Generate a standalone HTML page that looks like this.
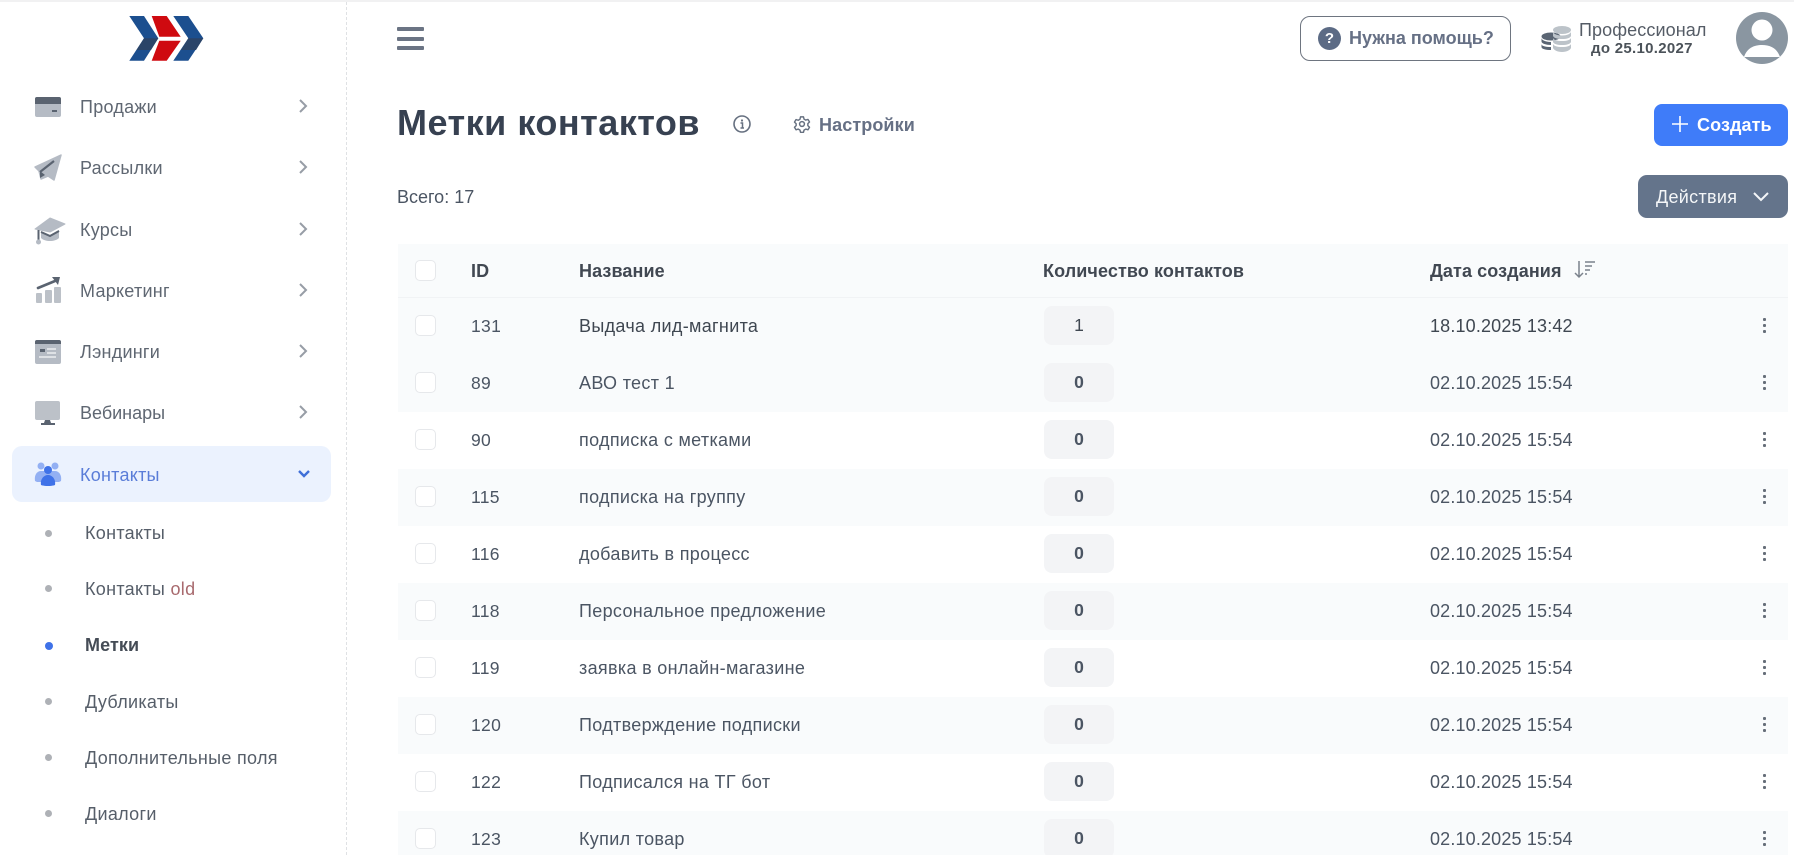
<!DOCTYPE html>
<html lang="ru"><head><meta charset="utf-8"><title>Метки контактов</title>
<style>
*{box-sizing:border-box}
html,body{margin:0;padding:0;width:1794px;height:855px;overflow:hidden;background:#fff;font-family:"Liberation Sans","Noto Sans CJK SC",sans-serif}
#p{position:relative;width:1794px;height:855px;overflow:hidden}
.a{position:absolute}
.t{position:absolute;white-space:nowrap;line-height:24px;height:24px}
.n{font-size:18px;color:#5f6772;left:80px;letter-spacing:.25px}
.s{font-size:18px;color:#565e69;left:85px;letter-spacing:.3px}
.d{position:absolute;left:45px;width:7px;height:7px;border-radius:50%;background:#aeb1b6}
.c{position:absolute;left:297px;width:12px;height:16px}
.r{position:absolute;left:398px;width:1390px;height:57px}
.sh{background:#f9fbfc}
.x{position:absolute;left:17px;top:17px;width:21px;height:21px;border:1px solid #e6e8eb;border-radius:5px;background:#fff}
.i{font-size:17.5px;color:#4b5563;left:73px;top:16px;letter-spacing:.3px}
.m{font-size:18px;color:#4b5563;left:181px;top:16px;letter-spacing:.32px}
.p{position:absolute;left:646px;top:8px;width:70px;height:39px;border-radius:8px;background:#f3f4f6;text-align:center;font-size:17.5px;font-weight:700;line-height:39px;color:#4b5563}
.w{font-size:18px;color:#4b5563;left:1032px;top:16px;letter-spacing:.16px}
.k{position:absolute;left:1365px;top:20px;width:3px;height:15px;background:radial-gradient(circle at 1.5px 1.5px,#666e79 1.5px,transparent 1.6px) 0 0/3px 6px repeat-y}
.h{font-size:18px;font-weight:700;color:#414852;letter-spacing:.1px}
</style></head><body><div id="p">

<div class="a" style="left:0;top:0;width:1794px;height:2px;background:#f1f1f2"></div>
<div class="a" style="left:346px;top:2px;width:0;height:853px;border-left:1px dashed #dfe1e4"></div>

<!-- logo -->
<svg class="a" style="left:125px;top:12px" width="84" height="54" viewBox="125 12 84 54">
<polygon points="129.300,16 144,16 158.300,38.300 144,60.700 129.300,60.700 144,38.300" fill="#1c4f8f"/>
<polygon points="144,38.300 158.300,38.300 151,50 136.500,50" fill="#2b4468"/>
<polygon points="151.700,16 166.700,16 180.700,36.700 159.300,36.700" fill="#cf0a10"/>
<polygon points="159.300,40.700 180.700,40.700 166.700,60.700 151.700,60.700" fill="#cf0a10"/>
<polygon points="173.300,16 188.300,16 203.300,38.300 188.300,60.700 173.300,60.700 188.300,38.300" fill="#1c4f8f"/>
<polygon points="188.300,38.300 203.300,38.300 196,50 181,50" fill="#2b4468"/>
</svg>

<!-- sidebar icons -->
<svg class="a" style="left:30px;top:90px" width="42" height="345" viewBox="30 90 42 345">
<rect x="35" y="97" width="26" height="20" rx="2" fill="#b5bbc4"/>
<path d="M35 104V99a2 2 0 0 1 2-2h22a2 2 0 0 1 2 2v5z" fill="#5a6370"/>
<rect x="52" y="110" width="5" height="2" fill="#5a6370"/>
<path d="M35 167 61 155 54 180 48 176 41 179 39 171z" fill="#b5bbc4" stroke="#b5bbc4" stroke-width="1.5" stroke-linejoin="round"/>
<path d="M40 172 54 161" stroke="#5a6370" stroke-width="2.2"/>
<path d="M40 171v7l5-3z" fill="#5a6370"/>
<path d="M35 229 50 218 65 224 50 232z" fill="#b5bbc4" stroke="#b5bbc4" stroke-linejoin="round"/>
<path d="M41 231 50 235 59 230v8c-4 4-14 4-18 0z" fill="#b5bbc4"/>
<path d="M41 232 50 236 59 231" stroke="#5a6370" stroke-width="2" fill="none"/>
<path d="M38.500 230v10" stroke="#5a6370" stroke-width="2"/>
<circle cx="38.500" cy="242" r="2.500" fill="#b5bbc4"/>
<rect x="36" y="293" width="6" height="10" rx="1" fill="#bcc1c8"/>
<rect x="45" y="290" width="7" height="13" rx="1" fill="#bcc1c8"/>
<rect x="54" y="287" width="7" height="16" rx="1" fill="#bcc1c8"/>
<path d="M38 288 55 281" stroke="#5a6370" stroke-width="2.600" stroke-linecap="round"/>
<path d="M52 277 60 277 58 285z" fill="#5a6370"/>
<rect x="35" y="340" width="26" height="24" rx="2" fill="#b5bbc4"/>
<path d="M35 344v-2a2 2 0 0 1 2-2h22a2 2 0 0 1 2 2v2z" fill="#5a6370"/>
<rect x="40" y="349" width="5" height="3" fill="#5a6370"/>
<path d="M47 349h9M47 353h9M39 357h17" stroke="#eceef0" stroke-width="1.500"/>
<rect x="35" y="401" width="25" height="19" rx="2" fill="#bcc1c8"/>
<path d="M45 420h5l1 3h4v2H41v-2h3z" fill="#5a6370"/>
</svg>
<svg class="a" style="left:33px;top:460px;z-index:3" width="30" height="26" viewBox="33 460 30 26">
<circle cx="41" cy="466" r="3.500" fill="#93b0f3"/><circle cx="55" cy="466" r="3.500" fill="#93b0f3"/>
<path d="M35 481c-1-6 2-10 6-10h14c4 0 7 4 6 10l-2 1H37z" fill="#93b0f3"/>
<circle cx="48" cy="470" r="4" fill="#3f72e8"/>
<path d="M41 485c-1-6 3-10 7-10s8 4 7 10c0 0-2 1-7 1s-7-1-7-1z" fill="#3f72e8"/>
</svg>

<!-- sidebar -->
<div class="t n" style="top:95px">Продажи</div>
<div class="t n" style="top:156px">Рассылки</div>
<div class="t n" style="top:218px">Курсы</div>
<div class="t n" style="top:279px">Маркетинг</div>
<div class="t n" style="top:340px">Лэндинги</div>
<div class="t n" style="top:401px;letter-spacing:0">Вебинары</div>
<svg class="c" style="top:98px" viewBox="0 0 12 16"><path d="M3 2l6 6-6 6" fill="none" stroke="#979da6" stroke-width="2"/></svg>
<svg class="c" style="top:159px" viewBox="0 0 12 16"><path d="M3 2l6 6-6 6" fill="none" stroke="#979da6" stroke-width="2"/></svg>
<svg class="c" style="top:221px" viewBox="0 0 12 16"><path d="M3 2l6 6-6 6" fill="none" stroke="#979da6" stroke-width="2"/></svg>
<svg class="c" style="top:282px" viewBox="0 0 12 16"><path d="M3 2l6 6-6 6" fill="none" stroke="#979da6" stroke-width="2"/></svg>
<svg class="c" style="top:343px" viewBox="0 0 12 16"><path d="M3 2l6 6-6 6" fill="none" stroke="#979da6" stroke-width="2"/></svg>
<svg class="c" style="top:404px" viewBox="0 0 12 16"><path d="M3 2l6 6-6 6" fill="none" stroke="#979da6" stroke-width="2"/></svg>

<div class="a" style="left:12px;top:446px;width:319px;height:56px;border-radius:10px;background:#ebf2fe"></div>
<div class="t n" style="top:463px;color:#5a7dd8">Контакты</div>
<svg class="a" style="left:297px;top:467px" width="14" height="14" viewBox="0 0 14 14"><path d="M2 4l5 5 5-5" fill="none" stroke="#3f6fd8" stroke-width="2.400"/></svg>

<div class="d" style="top:530px"></div><div class="t s" style="top:521px">Контакты</div>
<div class="d" style="top:585px"></div><div class="t s" style="top:577px">Контакты <span style="color:#a86a6e">old</span></div>
<div class="d" style="top:642px;width:8px;height:8px;background:#3f72e8"></div><div class="t s" style="top:633px;font-weight:700;color:#454c56;letter-spacing:.1px">Метки</div>
<div class="d" style="top:698px"></div><div class="t s" style="top:690px">Дубликаты</div>
<div class="d" style="top:754px"></div><div class="t s" style="top:746px">Дополнительные поля</div>
<div class="d" style="top:810px"></div><div class="t s" style="top:802px">Диалоги</div>

<!-- top bar -->
<div class="a" style="left:397px;top:27px;width:27px;height:4px;border-radius:1px;background:#6b7484"></div>
<div class="a" style="left:397px;top:37px;width:27px;height:4px;border-radius:1px;background:#6b7484"></div>
<div class="a" style="left:397px;top:46px;width:27px;height:4px;border-radius:1px;background:#6b7484"></div>

<div class="a" style="left:1300px;top:16px;width:211px;height:45px;border:1px solid #6e7580;border-radius:10px;background:#fff"></div>
<div class="a" style="left:1318px;top:27px;width:23px;height:23px;border-radius:50%;background:#5c6b85;color:#fff;font-size:15px;font-weight:700;text-align:center;line-height:23px">?</div>
<div class="t" style="left:1349px;top:26px;font-size:18px;font-weight:700;color:#667085;letter-spacing:0">Нужна помощь?</div>

<svg class="a" style="left:1540px;top:24px" width="33" height="30" viewBox="1540 24 33 30">
<g fill="#5a6573"><ellipse cx="1551" cy="36.500" rx="9.500" ry="4"/><path d="M1541.500 38c0 2 4 4 9.500 4v3c-5 0-9.500-1.500-9.500-3.500zM1541.500 44c0 2 4 3 9.500 3v3c-5 0-9.500-1-9.500-3z"/></g>
<g fill="#bcc3c9"><ellipse cx="1562" cy="30" rx="9" ry="4"/><path d="M1553 32c1 2 4 3.500 9 3.500s8-1.500 9-3.500v4c-1 2-4 3-9 3s-8-1-9-3zM1553 38c1 2 4 3 9 3s8-1 9-3v4c-1 2-4 3-9 3s-8-1-9-3zM1553 44c1 2 4 3 9 3s8-1 9-3v4c-1 2-4 4-9 4s-8-2-9-4z"/></g>
</svg>
<div class="t" style="left:1579px;top:18px;font-size:18px;color:#555c66;letter-spacing:.1px">Профессионал</div>
<div class="t" style="left:1591px;top:37px;font-size:15px;font-weight:700;color:#4b5259;letter-spacing:.3px">до 25.10.2027</div>

<svg class="a" style="left:1736px;top:12px" width="52" height="52" viewBox="0 0 52 52">
<circle cx="26" cy="26" r="26" fill="#8a96a1"/>
<circle cx="26" cy="18" r="10.500" fill="#fff"/>
<path d="M8 45c3-9 10-12 18-12s15 3 18 12z" fill="#fff"/>
</svg>

<!-- heading -->
<div class="t" style="left:397px;top:103px;height:40px;line-height:40px;font-size:36px;font-weight:700;color:#374151;letter-spacing:.5px">Метки контактов</div>
<svg class="a" style="left:732px;top:114px" width="20" height="20" viewBox="0 0 20 20"><circle cx="10" cy="10" r="8" fill="none" stroke="#667080" stroke-width="1.600"/><circle cx="10" cy="6.500" r="1.100" fill="#667080"/><path d="M8.500 9h2v4.500M8.500 14h3.500" fill="none" stroke="#667080" stroke-width="1.500"/></svg>
<svg class="a" style="left:793px;top:114px" width="18" height="20" viewBox="0 0 24 24"><circle cx="12" cy="12" r="3.200" fill="none" stroke="#667080" stroke-width="2"/><path d="M10 2.500h4l.7 3 2.300 1.300 3-.9 2 3.400-2.200 2.200v2.600l2.200 2.200-2 3.400-3-.9-2.300 1.300-.7 3h-4l-.7-3-2.300-1.300-3 .9-2-3.400 2.200-2.200V11.700L2 9.500l2-3.400 3 .9 2.300-1.300z" fill="none" stroke="#667080" stroke-width="1.900" stroke-linejoin="round"/></svg>
<div class="t" style="left:819px;top:113px;font-size:18px;font-weight:700;color:#667085;letter-spacing:.1px">Настройки</div>

<div class="a" style="left:1654px;top:104px;width:134px;height:42px;border-radius:8px;background:#3f7cf9"></div>
<svg class="a" style="left:1672px;top:116px" width="16" height="16" viewBox="0 0 16 16"><path d="M8 0v16M0 8h16" stroke="#fff" stroke-width="1.600"/></svg>
<div class="t" style="left:1697px;top:113px;font-size:18px;font-weight:700;color:#fff;letter-spacing:.1px">Создать</div>

<div class="t" style="left:397px;top:185px;font-size:18px;color:#4b5563;letter-spacing:0">Всего: 17</div>

<div class="a" style="left:1638px;top:175px;width:150px;height:43px;border-radius:9px;background:#64748b"></div>
<div class="t" style="left:1656px;top:185px;font-size:18px;color:#f4f6f8;letter-spacing:.3px">Действия</div>
<svg class="a" style="left:1753px;top:191px" width="16" height="12" viewBox="0 0 16 12"><path d="M1 2l7 7 7-7" fill="none" stroke="#f4f6f8" stroke-width="2"/></svg>

<!-- table header -->
<div class="a" style="left:398px;top:244px;width:1390px;height:54px;background:#f9fbfc;border-bottom:1px solid #f1f3f5"></div>
<div class="a" style="left:415px;top:260px;width:21px;height:21px;border:1px solid #e6e8eb;border-radius:5px;background:#fff"></div>
<div class="t h" style="left:471px;top:259px">ID</div>
<div class="t h" style="left:579px;top:259px">Название</div>
<div class="t h" style="left:1043px;top:259px">Количество контактов</div>
<div class="t h" style="left:1430px;top:259px">Дата создания</div>
<svg class="a" style="left:1574px;top:260px" width="22" height="20" viewBox="0 0 22 20"><path d="M5 1v16M1 13l4 4 4-4" fill="none" stroke="#7b828c" stroke-width="1.500"/><path d="M11 2h10M11 6h7M11 10h5M11 14h2" stroke="#7b828c" stroke-width="1.500"/></svg>

<!-- rows -->
<div class="r sh" style="top:298px"><div class="x"></div><div class="t i">131</div><div class="t m" style="color:#3f4751">Выдача лид-магнита</div><div class="p" style="font-weight:400;background:#f3f4f6;color:#3f4751">1</div><div class="t w" style="color:#3f4751">18.10.2025 13:42</div><div class="k"></div></div>
<div class="r sh" style="top:355px"><div class="x"></div><div class="t i">89</div><div class="t m">АВО тест 1</div><div class="p">0</div><div class="t w">02.10.2025 15:54</div><div class="k"></div></div>
<div class="r" style="top:412px"><div class="x"></div><div class="t i">90</div><div class="t m">подписка с метками</div><div class="p">0</div><div class="t w">02.10.2025 15:54</div><div class="k"></div></div>
<div class="r sh" style="top:469px"><div class="x"></div><div class="t i">115</div><div class="t m">подписка на группу</div><div class="p">0</div><div class="t w">02.10.2025 15:54</div><div class="k"></div></div>
<div class="r" style="top:526px"><div class="x"></div><div class="t i">116</div><div class="t m">добавить в процесс</div><div class="p">0</div><div class="t w">02.10.2025 15:54</div><div class="k"></div></div>
<div class="r sh" style="top:583px"><div class="x"></div><div class="t i">118</div><div class="t m">Персональное предложение</div><div class="p">0</div><div class="t w">02.10.2025 15:54</div><div class="k"></div></div>
<div class="r" style="top:640px"><div class="x"></div><div class="t i">119</div><div class="t m">заявка в онлайн-магазине</div><div class="p">0</div><div class="t w">02.10.2025 15:54</div><div class="k"></div></div>
<div class="r sh" style="top:697px"><div class="x"></div><div class="t i">120</div><div class="t m">Подтверждение подписки</div><div class="p">0</div><div class="t w">02.10.2025 15:54</div><div class="k"></div></div>
<div class="r" style="top:754px"><div class="x"></div><div class="t i">122</div><div class="t m">Подписался на ТГ бот</div><div class="p">0</div><div class="t w">02.10.2025 15:54</div><div class="k"></div></div>
<div class="r sh" style="top:811px"><div class="x"></div><div class="t i">123</div><div class="t m">Купил товар</div><div class="p">0</div><div class="t w">02.10.2025 15:54</div><div class="k"></div></div>

</div></body></html>
